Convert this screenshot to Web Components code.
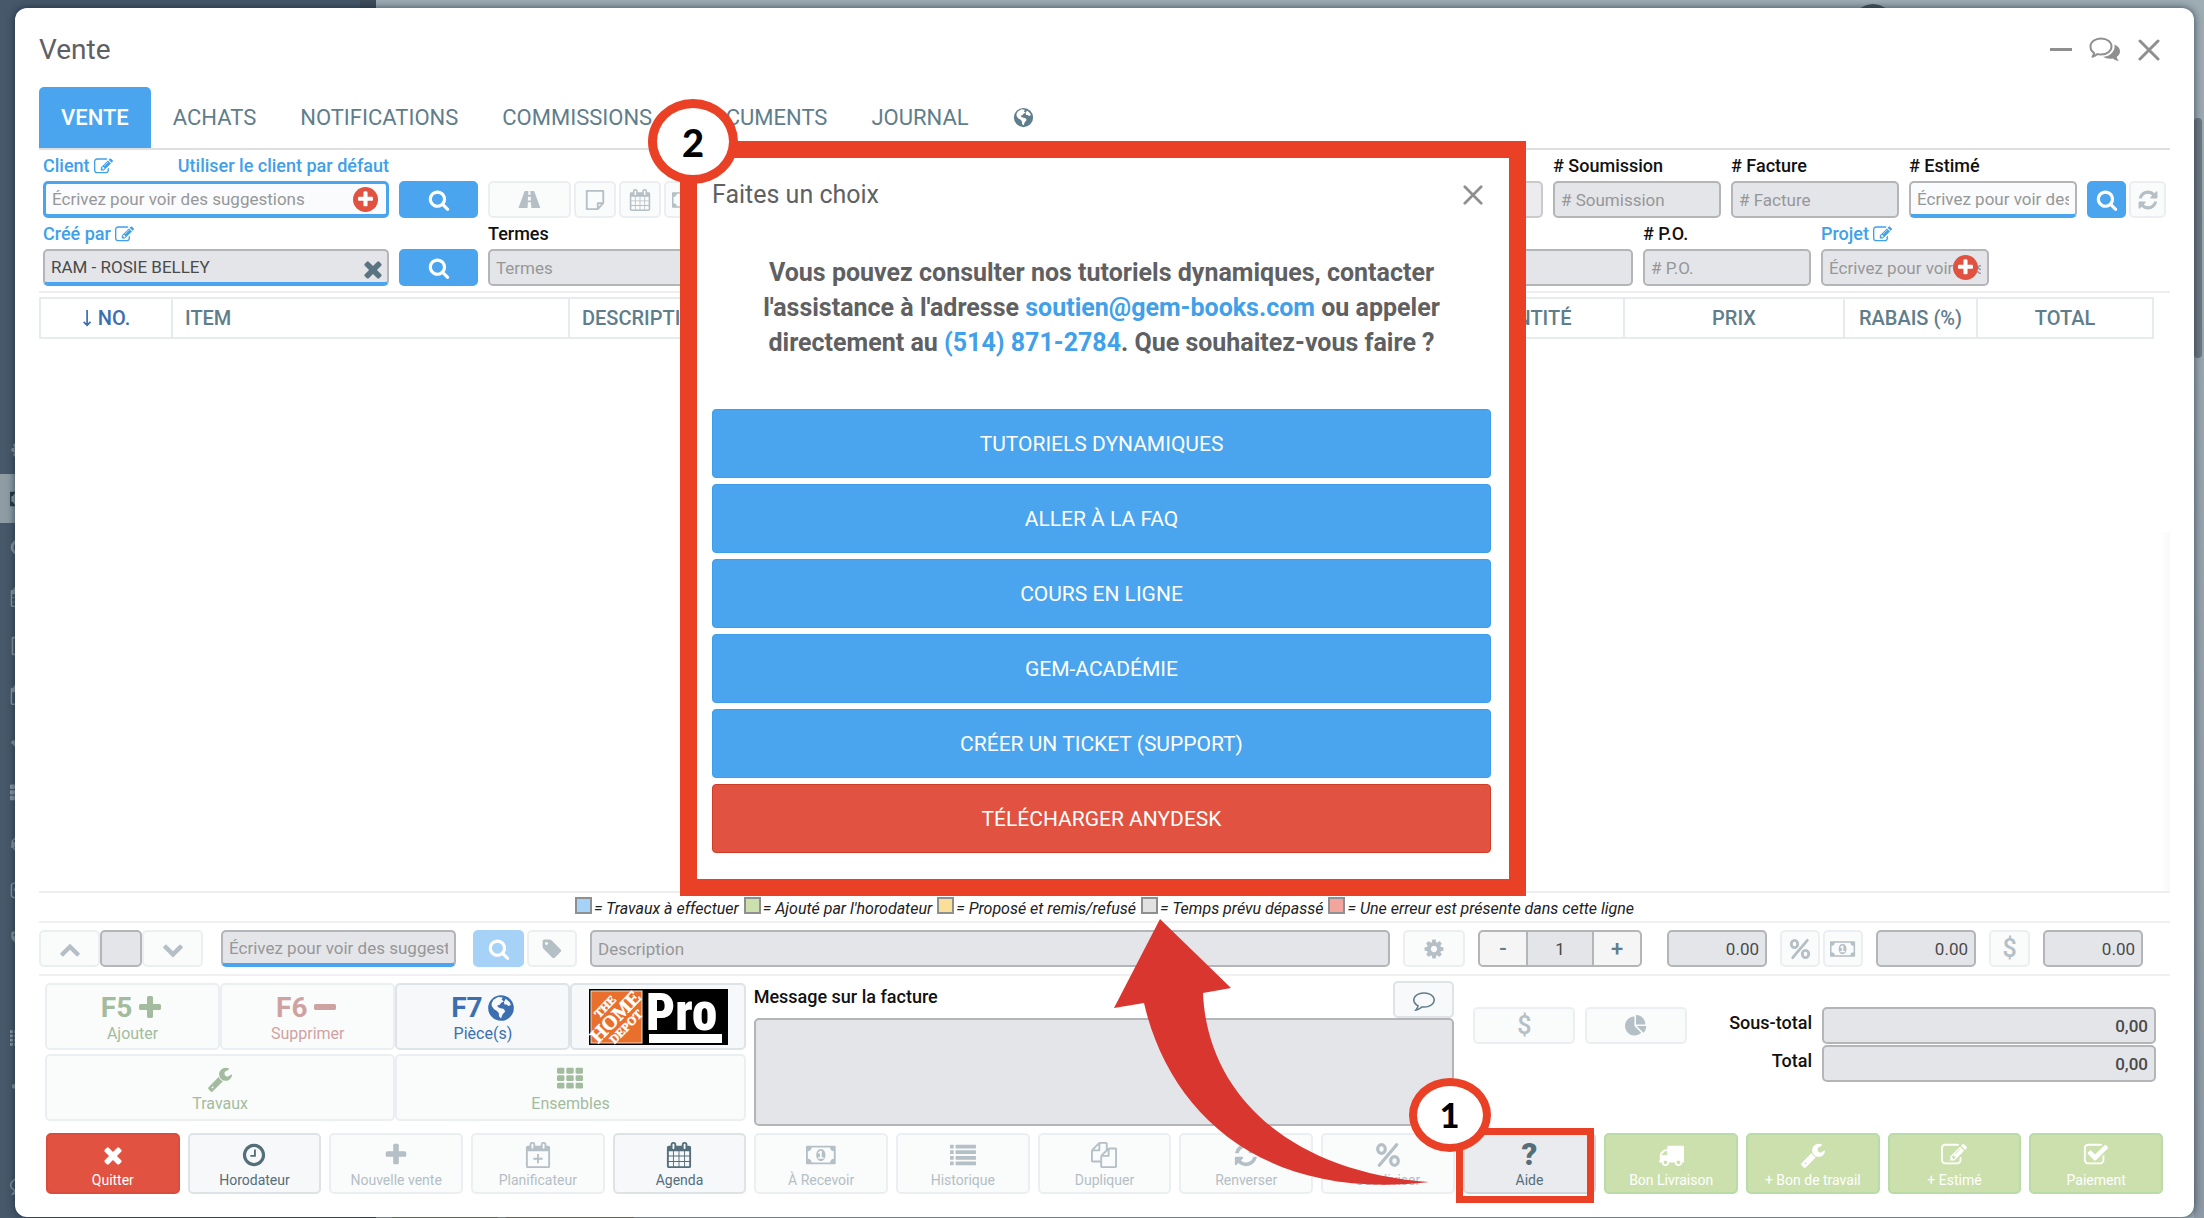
<!DOCTYPE html>
<html lang="fr">
<head>
<meta charset="utf-8">
<title>Vente</title>
<style>
body{ margin:0; font-family:Roboto,"Liberation Sans",sans-serif; font-size:17px; color:#212121; background:#96a3ad; }
</style>
</head>
<body>
<sale-app></sale-app>
<script>
const FA = '0 0 1792 1792';
const ICONS = {
    search: [FA, '<path d="M1216 832q0-185-131.5-316.5t-316.5-131.5-316.5 131.5-131.5 316.5 131.5 316.5 316.5 131.5 316.5-131.5 131.5-316.5zm512 832q0 52-38 90t-90 38q-54 0-90-38l-343-342q-179 124-399 124-143 0-273.5-55.5t-225-150-150-225-55.5-273.5 55.5-273.5 150-225 225-150 273.5-55.5 273.5 55.5 225 150 150 225 55.5 273.5q0 220-124 399l343 343q37 37 37 90z"/>'],
    times: [FA, '<path d="M1490 1322q0 40-28 68l-136 136q-28 28-68 28t-68-28l-294-294-294 294q-28 28-68 28t-68-28l-136-136q-28-28-28-68t28-68l294-294-294-294q-28-28-28-68t28-68l136-136q28-28 68-28t68 28l294 294 294-294q28-28 68-28t68 28l136 136q28 28 28 68t-28 68l-294 294 294 294q28 28 28 68z"/>'],
    plus: [FA, '<path d="M1600 736v192q0 40-28 68t-68 28h-416v416q0 40-28 68t-68 28h-192q-40 0-68-28t-28-68v-416h-416q-40 0-68-28t-28-68v-192q0-40 28-68t68-28h416v-416q0-40 28-68t68-28h192q40 0 68 28t28 68v416h416q40 0 68 28t28 68z"/>'],
    minus: [FA, '<path d="M1600 736v192q0 40-28 68t-68 28h-1216q-40 0-68-28t-28-68v-192q0-40 28-68t68-28h1216q40 0 68 28t28 68z"/>'],
    clock: [FA, '<path d="M1024 544v448q0 14-9 23t-23 9h-320q-14 0-23-9t-9-23v-64q0-14 9-23t23-9h224v-352q0-14 9-23t23-9h64q14 0 23 9t9 23zm416 352q0-148-73-273t-198-198-273-73-273 73-198 198-73 273 73 273 198 198 273 73 273-73 198-198 73-273zm224 0q0 209-103 385.5t-279.5 279.5-385.5 103-385.5-103-279.5-279.5-103-385.5 103-385.5 279.5-279.5 385.5-103 385.5 103 279.5 279.5 103 385.5z"/>'],
    calendar: [FA, '<path d="M192 1664h288v-288h-288v288zm352 0h320v-288h-320v288zm-352-352h288v-320h-288v320zm352 0h320v-320h-320v320zm-352-384h288v-288h-288v288zm736 736h320v-288h-320v288zm-384-736h320v-288h-320v288zm768 736h288v-288h-288v288zm-384-352h320v-320h-320v320zm-352-864v-288q0-13-9.500-22.500t-22.500-9.500h-64q-13 0-22.500 9.500t-9.500 22.500v288q0 13 9.500 22.500t22.500 9.500h64q13 0 22.500-9.500t9.500-22.500zm736 864h288v-320h-288v320zm-384-384h320v-288h-320v288zm384 0h288v-288h-288v288zm32-480v-288q0-13-9.500-22.500t-22.500-9.500h-64q-13 0-22.500 9.500t-9.500 22.500v288q0 13 9.500 22.500t22.500 9.500h64q13 0 22.500-9.500t9.500-22.500zm384-64v1280q0 52-38 90t-90 38h-1408q-52 0-90-38t-38-90v-1280q0-52 38-90t90-38h128v-96q0-66 47-113t113-47h64q66 0 113 47t47 113v96h384v-96q0-66 47-113t113-47h64q66 0 113 47t47 113v96h128q52 0 90 38t38 90z"/>'],
    calplus: [FA, '<path fill-rule="evenodd" d="M1728 256v1408q0 128-128 128H192q-128 0-128-128V384q0-128 128-128h128v-96q0-160 160-160h64q160 0 160 160v96h384v-96q0-160 160-160h64q160 0 160 160v96h128q128 0 128 128zM192 640v1024h1408V640zM448 128v320h128V128zm768 0v320h128V128zM832 832h128v256h256v128H960v256H832v-256H576v-128h256z"/>'],
    edit: [FA, '<path d="M888 1184l116-116-152-152-116 116v56h96v96h56zm440-720q-16-16-33 1l-350 350q-17 17-1 33t33-1l350-350q17-17 1-33zm80 594v190q0 119-84.500 203.500t-203.500 84.500h-832q-119 0-203.500-84.500t-84.500-203.500v-832q0-119 84.500-203.500t203.500-84.500h832q63 0 117 25 15 7 18 23 3 17-9 29l-49 49q-14 14-32 8-23-6-45-6h-832q-66 0-113 47t-47 113v832q0 66 47 113t113 47h832q66 0 113-47t47-113v-126q0-13 9-22l64-64q15-15 35-7t20 29zm-96-738l288 288-672 672h-288v-288zm444 132l-92 92-288-288 92-92q28-28 68-28t68 28l152 152q28 28 28 68t-28 68z"/>'],
    check: [FA, '<path d="M1472 930v318q0 119-84.500 203.500t-203.500 84.500h-832q-119 0-203.500-84.500t-84.500-203.500v-832q0-119 84.500-203.500t203.500-84.500h832q63 0 117 25 15 7 18 23 3 17-9 29l-49 49q-10 10-23 10-3 0-9-2-23-6-45-6h-832q-66 0-113 47t-47 113v832q0 66 47 113t113 47h832q66 0 113-47t47-113v-254q0-13 9-22l64-64q10-10 23-10 6 0 12 3 20 8 20 29zm231-489l-814 814q-24 24-57 24t-57-24l-430-430q-24-24-24-57t24-57l110-110q24-24 57-24t57 24l263 263 647-647q24-24 57-24t57 24l110 110q24 24 24 57t-24 57z"/>'],
    wrench: [FA, '<path d="M448 1472q0-26-19-45t-45-19-45 19-19 45 19 45 45 19 45-19 19-45zm644-420l-682 682q-37 37-90 37-52 0-91-37l-106-108q-38-36-38-90 0-53 38-91l681-681q39 98 114.500 173.500t173.500 114.500zm634-435q0 39-23 106-47 134-164.500 217.500t-258.500 83.500q-185 0-316.500-131.500t-131.500-316.500 131.500-316.500 316.500-131.500q58 0 121.500 16.500t107.500 46.500q16 11 16 28t-16 28l-293 169v224l193 107q5-3 79-48.500t135.500-81 70.500-35.500q15 0 23.500 10t8.500 25z"/>'],
    th: [FA, [128, 640, 1152].map(y => [0, 640, 1280].map(x => `<rect x="${x}" y="${y}" width="512" height="400" rx="96"/>`).join('')).join('')],
    list: [FA, [192, 576, 960, 1344].map(y => `<rect x="0" y="${y}" width="256" height="256" rx="32"/><rect x="384" y="${y}" width="1408" height="256" rx="32"/>`).join('')],
    money: ['0 0 2048 1792', '<path d="M832 1152h384v-96h-128v-448h-114l-148 137 77 80q42-37 55-57h2v288h-128v96zm512-256q0 70-21 142t-59.500 134-101.500 101-138 39-138-39-101.500-101-59.500-134-21-142 21-142 59.500-134 101.500-101 138-39 138 39 101.500 101 59.500 134 21 142zm576 256v-512q-106 0-181-75t-75-181h-1280q0 106-75 181t-181 75v512q106 0 181 75t75 181h1280q0-106 75-181t181-75zm128-832v1152q0 26-19 45t-45 19h-1920q-26 0-45-19t-19-45v-1152q0-26 19-45t45-19h1920q26 0 45 19t19 45z"/>'],
    refresh: [FA, '<path d="M1639 1056q0 5-1 7-64 268-268 434.500t-478 166.500q-146 0-282.500-55t-243.500-157l-129 129q-19 19-45 19t-45-19-19-45v-448q0-26 19-45t45-19h448q26 0 45 19t19 45-19 45l-137 137q71 66 161 102t187 36q134 0 250-65t186-179q11-17 53-117 8-23 30-23h192q13 0 22.500 9.500t9.500 22.500zm25-800v448q0 26-19 45t-45 19h-448q-26 0-45-19t-19-45 19-45l138-138q-148-137-349-137-134 0-250 65t-186 179q-11 17-53 117-8 23-30 23h-199q-13 0-22.500-9.500t-9.500-22.500v-7q65-268 270-434.500t480-166.500q146 0 284 55.500t245 156.500l130-129q19-19 45-19t45 19 19 45z"/>'],
    truck: [FA, '<path d="M640 1408q0-52-38-90t-90-38-90 38-38 90 38 90 90 38 90-38 38-90zm-384-512h384v-256h-158q-13 0-22 9l-195 195q-9 9-9 22v30zm1280 512q0-52-38-90t-90-38-90 38-38 90 38 90 90 38 90-38 38-90zm256-1088v1024q0 15-4 26.500t-13.500 18.500-16.500 11.500-23.500 6-22.500 2-25.500 0-22.500-.5q0 106-75 181t-181 75-181-75-75-181h-384q0 106-75 181t-181 75-181-75-75-181h-64q-3 0-22.500.5t-25.500 0-22.500-2-23.500-6-16.500-11.500-13.500-18.500-4-26.500q0-26 19-45t45-19v-320q0-8-.5-35t0-38 2.500-34.500 6.500-37 14-30.500 22.500-30l198-198q19-19 50.500-32t58.500-13h160v-192q0-26 19-45t45-19h1024q26 0 45 19t19 45z"/>'],
    copy: [FA, '<path d="M1696 384q40 0 68 28t28 68v1216q0 40-28 68t-68 28h-960q-40 0-68-28t-28-68v-288h-544q-40 0-68-28t-28-68v-672q0-40 20-88t48-76l408-408q28-28 76-48t88-20h416q40 0 68 28t28 68v328q68-40 128-40h416zm-544 213l-299 299h299v-299zm-640-384l-299 299h299v-299zm196 647l316-316v-416h-384v416q0 40-28 68t-68 28h-416v640h512v-256q0-40 20-88t48-76zm956 804v-1152h-384v416q0 40-28 68t-68 28h-416v640h896z"/>'],
    tag: [FA, '<path d="M576 448q0-53-37.500-90.500t-90.500-37.500-90.500 37.500-37.500 90.500 37.500 90.500 90.500 37.500 90.500-37.500 37.500-90.500zm1067 576q0 53-37 90l-491 492q-39 37-91 37-53 0-90-37l-715-716q-38-37-64.500-101t-26.500-117v-416q0-52 38-90t90-38h416q53 0 117 26.500t102 64.500l715 714q37 39 37 91z"/>'],
    cog: [FA, '<path d="M1152 896q0-106-75-181t-181-75-181 75-75 181 75 181 181 75 181-75 75-181zm512-109v222q0 12-8 23t-20 13l-185 28q-19 54-39 91 35 50 107 138 10 12 10 25t-9 23q-27 37-99 108t-94 71q-12 0-26-9l-138-108q-44 23-91 38-16 136-29 186-7 28-36 28h-222q-14 0-24.500-8.500t-11.500-21.500l-28-184q-49-16-90-37l-141 107q-10 9-25 9-14 0-25-11-126-114-165-168-7-10-7-23 0-12 8-23 15-21 51-66.500t54-70.500q-27-50-41-99l-183-27q-13-2-21-12.500t-8-23.500v-222q0-12 8-23t19-13l186-28q14-46 39-92-40-57-107-138-10-12-10-24 0-10 9-23 26-36 98.500-107.500t94.500-71.500q13 0 26 10l138 107q44-23 91-38 16-136 29-186 7-28 36-28h222q14 0 24.500 8.500t11.500 21.500l28 184q49 16 90 37l142-107q9-9 24-9 13 0 25 10 129 119 165 170 7 8 7 22 0 12-8 23-15 21-51 66.500t-54 70.500q26 50 41 98l183 28q13 2 21 12.500t8 23.500z"/>'],
    comment: [FA, '<path d="M896 384q-204 0-381.500 69.500t-282 187.500-104.500 255q0 112 71.500 213.500t201.500 175.500l87 50-27 96q-24 91-70 172 152-63 275-171l43-38 57 6q69 8 130 8 204 0 381.500-69.500t282-187.500 104.500-255-104.500-255-282-187.500-381.500-69.500zm896 512q0 174-120 321.500t-326 233-450 85.500q-70 0-145-8-198 175-460 242-49 14-114 22h-5q-15 0-27-10.500t-16-27.500v-1q-3-4-.5-12t2-10 4.500-9.500l6-9 7-8.500 8-9q7-8 31-34.500t34.500-38 31-39.500 32.500-51 27-59 26-76q-157-89-247.500-220t-90.500-281q0-174 120-321.500t326-233 450-85.500 450 85.500 326 233 120 321.500z"/>'],
    comments: ['0 0 32 26', '<path fill="none" stroke="currentColor" stroke-width="2" stroke-linejoin="round" d="M12 1.500c6 0 10.500 3.500 10.500 8s-4.500 8-10.500 8c-1.200 0-2.400-.1-3.500-.4-1.400 1.300-3 2.200-5 2.600.9-1.200 1.500-2.200 1.700-3.700C2.800 14.500 1.500 12.200 1.500 9.500c0-4.500 4.500-8 10.500-8z"/><path d="M25.500 7.500c3.200 1.200 5.500 3.700 5.500 6.700 0 2.300-1.300 4.300-3.300 5.700.4 1.700 1.200 2.900 2.500 4.200-2.600-.3-4.600-1.300-6.300-2.700-3.600.7-7.200.1-9.800-1.600 7-.3 12.500-5.500 11.400-12.300z"/>'],
    up: [FA, '<path d="M1683 1331l-166 165q-19 19-45 19t-45-19l-531-531-531 531q-19 19-45 19t-45-19l-166-165q-19-19-19-45.500t19-45.500l742-741q19-19 45-19t45 19l742 741q19 19 19 45.500t-19 45.500z"/>'],
    down: [FA, '<path d="M1683 808l-742 741q-19 19-45 19t-45-19l-742-741q-19-19-19-45.500t19-45.500l166-165q19-19 45-19t45 19l531 531 531-531q19-19 45-19t45 19l166 165q19 19 19 45.500t-19 45.500z"/>'],
    pie: [FA, '<path d="M768 890l546 546q-106 108-247.500 168t-298.500 60q-209 0-385.500-103t-279.500-279.500-103-385.500 103-385.500 279.500-279.500 385.500-103v762zm187 6h773q0 157-60 298.500t-168 247.500zm709-128h-768v-768q209 0 385.500 103t279.500 279.500 103 385.500z"/>'],
    percent: ['0 0 24 24', '<g fill="none" stroke="currentColor" stroke-width="3"><ellipse cx="6" cy="6.500" rx="3.500" ry="4"/><ellipse cx="18" cy="17.500" rx="3.500" ry="4"/><path stroke-linecap="round" d="M20 2.500L4 21.500"/></g>'],
    note: ['0 0 24 24', '<path fill="none" stroke="currentColor" stroke-width="2" stroke-linejoin="round" d="M3 2h18v13.500L15 22H3zM21 15.500h-6V22"/>'],
    road: ['0 0 24 20', '<path fill-rule="evenodd" d="M7 1h4l-.3 4h2.600L13 1h4l6.500 18H14l-.4-6h-3.200L10 19H.5zM10.600 7l-.2 4h3.200l-.2-4z"/>'],
    globe: ['0 0 24 24', '<path fill-rule="evenodd" d="M12 1a11 11 0 110 22 11 11 0 010-22zM5.500 5l4-2.500 4 .5-1 2 2 1.200-2.500 1.500-1.200 1.800-1.800.2.300 1.500 1.800.8 3.400.9 1.100 2-2.300 2.700-1.300 3.400-1.700-1.900-.2-2.900-1.800-1.900-2.200-1.300-1.900-2.400-.3-2.500zM16 4l3.500 3 1 2.500-2.200.8-1.500-1.300h-1.800l-.5-2z"/>'],
    close: ['0 0 22 22', '<path fill="none" stroke="currentColor" stroke-width="3" stroke-linecap="round" d="M2 2l18 18M20 2L2 20"/>'],
    dash: ['0 0 22 22', '<path d="M0 9h22v3H0z"/>'],
    sort: ['0 0 12 20', '<path fill="none" stroke="currentColor" stroke-width="2" d="M6 0v18M2 14l4 4 4-4"/>']
};

const BOX = `*{ box-sizing:border-box; } button,input,textarea{ font:inherit; margin:0; }`;

class SaleIcon extends HTMLElement {
    constructor() {
        super();
        this.attachShadow({ mode: 'open' });
    }

    connectedCallback() {
        const [box, body] = ICONS[this.getAttribute('name')];
        const size = this.getAttribute('size') || 20;
        this.shadowRoot.innerHTML = `
        <style>
        :host{ display:inline-flex; flex:none; }
        svg{ display:block; width:auto; height:${size}px; fill:currentColor; }
        </style>
        <svg viewBox="${box}" height="${size}" aria-hidden="true">${body}</svg>
        `
    }
}

// small square button: search, refresh, tag...
class IconBtn extends HTMLElement {
    constructor() {
        super();
        this.attachShadow({ mode: 'open' });
    }

    connectedCallback() {
        const icon = this.getAttribute('icon');
        this.shadowRoot.innerHTML = `
        <style>
        ${BOX}
        :host{ display:block; flex:none; width:var(--w,42px); height:37px; }
        button{ display:flex; align-items:center; justify-content:center; width:100%; height:100%; padding:0; border:2px solid #eceff1; border-radius:5px; background:#fafbfb; color:#b4bfc6; font-size:25px; font-weight:500; line-height:32px; }
        :host([type="primary"]) button{ background:#4aa5ee; border-color:#4aa5ee; color:#fff; }
        :host([type="soft"]) button{ background:#a5d2f6; border-color:#a5d2f6; color:#fff; }
        :host([type="plain"]) button{ background:#f8f9fa; border-color:#dde3e6; color:#607d8b; }
        </style>
        <button type="button" aria-label="${this.getAttribute('label') || icon}">${icon ? `<sale-icon name="${icon}" size="${this.getAttribute('size') || 22}"></sale-icon>` : '<slot></slot>'}</button>
        `
    }
}

class FieldBox extends HTMLElement {
    constructor() {
        super();
        this.attachShadow({ mode: 'open' });
    }

    connectedCallback() {
        const get = name => this.getAttribute(name) || '';
        const label = get('label');
        this.shadowRoot.innerHTML = `
        <style>
        ${BOX}
        :host{ display:block; flex:none; width:var(--w,168px); }
        .top{ display:flex; align-items:center; height:24px; margin-bottom:3px; font-size:18px; font-weight:500; line-height:24px; color:#111; white-space:nowrap; }
        .top a{ color:#41a0ea; text-decoration:none; }
        .top a.edit{ display:flex; margin-left:4px; }
        .top a.extra{ margin-left:auto; }
        :host([link]) label{ color:#41a0ea; }
        .wrap{ display:flex; align-items:center; position:relative; }
        input{ width:100%; height:37px; padding:0 6px; border:2px solid #b3b5b8; border-radius:5px; background:#e4e5e9; color:#4a4a4a; outline:0; }
        input::placeholder{ color:#969798; opacity:1; }
        :host([white]) input{ background:#fafbfc; }
        :host([accent]) input{ border-bottom:4px solid #4aa5ee; }
        :host([focused]) input{ border:3px solid #4aa5ee; border-bottom-width:4px; }
        :host([right]) input{ text-align:right; }
        :host([strong]) input{ font-weight:500; }
        .badge{ position:absolute; right:11px; display:flex; align-items:center; justify-content:center; width:25px; height:25px; border-radius:50%; border:0; padding:0; background:#e15241; color:#fff; }
        .clear{ position:absolute; right:3px; bottom:4px; display:flex; border:0; padding:0; background:none; color:#5b7482; }
        </style>
        ${label ? `<div class="top"><label for="f">${label}</label>${this.hasAttribute('link') ? '<a class="edit" href="#" aria-label="Modifier"><sale-icon name="edit" size="19"></sale-icon></a>' : ''}${get('extra') ? `<a class="extra" href="#">${get('extra')}</a>` : ''}</div>` : ''}
        <div class="wrap">
            <input id="f" type="text" aria-label="${label || get('hint') || get('name')}" placeholder="${get('hint')}" value="${get('value')}">
            ${this.hasAttribute('add') ? '<button class="badge" type="button" aria-label="Ajouter"><sale-icon name="plus" size="19"></sale-icon></button>' : ''}
            ${this.hasAttribute('clear') ? '<button class="clear" type="button" aria-label="Effacer"><sale-icon name="times" size="26"></sale-icon></button>' : ''}
        </div>
        `
    }
}

class SaleTabs extends HTMLElement {
    constructor() {
        super();
        const shadowRoot = this.attachShadow({ mode: 'open' });
        shadowRoot.innerHTML = `
        <style>
        ${BOX}
        :host{ display:block; border-bottom:2px solid #dfdfdf; }
        nav{ display:flex; }
        a{ display:flex; align-items:center; height:61px; padding:0 22px; color:#607d8b; font-size:22px; text-decoration:none; }
        a.on{ background:#4aa5ee; color:#fff; font-weight:500; border-radius:5px 5px 0 0; }
        </style>
        <nav>
            <a class="on" href="#">VENTE</a>
            <a href="#">ACHATS</a>
            <a href="#">NOTIFICATIONS</a>
            <a href="#">COMMISSIONS</a>
            <a href="#">DOCUMENTS</a>
            <a href="#">JOURNAL</a>
            <a href="#" aria-label="Web"><sale-icon name="globe" size="21"></sale-icon></a>
        </nav>
        `
    }
}

class SaleFilters extends HTMLElement {
    constructor() {
        super();
        const shadowRoot = this.attachShadow({ mode: 'open' });
        shadowRoot.innerHTML = `
        <style>
        ${BOX}
        :host{ display:flex; flex-direction:column; gap:4px; padding:4px 4px 5px 4px; border-bottom:2px solid #eee; }
        .row{ display:flex; align-items:flex-end; gap:10px; }
        .group{ display:flex; gap:3px; }
        .grow{ flex:1; width:auto; min-width:0; }
        .light{ opacity:.7; }
        .late{ margin-right:177px; }
        </style>
        <div class="row">
            <field-box style="--w:346px" label="Client" link focused white add extra="Utiliser le client par défaut" hint="Écrivez pour voir des suggestions"></field-box>
            <icon-btn style="--w:79px" type="primary" icon="search" label="Rechercher"></icon-btn>
            <div class="group">
                <icon-btn style="--w:83px" icon="road" size="19"></icon-btn>
                <icon-btn icon="note"></icon-btn>
                <icon-btn icon="calendar"></icon-btn>
                <icon-btn icon="money"></icon-btn>
            </div>
            <field-box class="grow light" name="Statut"></field-box>
            <field-box label="# Soumission" hint="# Soumission"></field-box>
            <field-box label="# Facture" hint="# Facture"></field-box>
            <field-box label="# Estimé" white accent hint="Écrivez pour voir des suggestions"></field-box>
            <div class="group">
                <icon-btn style="--w:39px" type="primary" icon="search" label="Rechercher"></icon-btn>
                <icon-btn style="--w:37px" icon="refresh"></icon-btn>
            </div>
        </div>
        <div class="row">
            <field-box style="--w:346px" label="Créé par" link accent clear value="RAM - ROSIE BELLEY"></field-box>
            <icon-btn style="--w:79px" type="primary" icon="search" label="Rechercher"></icon-btn>
            <field-box class="grow" label="Termes" hint="Termes"></field-box>
            <field-box label="# P.O." hint="# P.O."></field-box>
            <field-box class="late" label="Projet" link add hint="Écrivez pour voir des suggestions"></field-box>
        </div>
        `
    }
}

class SaleLines extends HTMLElement {
    constructor() {
        super();
        const shadowRoot = this.attachShadow({ mode: 'open' });
        shadowRoot.innerHTML = `
        <style>
        ${BOX}
        :host{ display:block; flex:1; padding:4px 16px 0 0; border-bottom:2px solid #eee; background:linear-gradient(to left,#f9f9f9,#fff) right bottom/10px 60% no-repeat; }
        table{ width:100%; table-layout:fixed; border-collapse:collapse; }
        th{ height:40px; padding:0 12px; border:2px solid #e6ebee; text-align:left; font-size:20px; font-weight:500; color:#607d8b; overflow:hidden; white-space:nowrap; }
        .c{ text-align:center; }
        .sorted{ color:#3b6fb0; }
        .sorted sale-icon{ margin-right:6px; vertical-align:-2px; }
        </style>
        <table>
            <colgroup><col style="width:132px"><col style="width:397px"><col><col style="width:200px"><col style="width:220px"><col style="width:133px"><col style="width:176px"></colgroup>
            <thead><tr>
                <th class="c sorted"><sale-icon name="sort" size="17"></sale-icon>NO.</th>
                <th>ITEM</th>
                <th>DESCRIPTION</th>
                <th class="c">QUANTITÉ</th>
                <th class="c">PRIX</th>
                <th class="c">RABAIS (%)</th>
                <th class="c">TOTAL</th>
            </tr></thead>
            <tbody></tbody>
        </table>
        `
    }
}

class SaleLegend extends HTMLElement {
    constructor() {
        super();
        const shadowRoot = this.attachShadow({ mode: 'open' });
        const items = [
            ['#a5d2f6', 'Travaux à effectuer'],
            ['#cce0ad', "Ajouté par l'horodateur"],
            ['#fadf98', 'Proposé et remis/refusé'],
            ['#e2e2e2', 'Temps prévu dépassé'],
            ['#f1a59d', 'Une erreur est présente dans cette ligne']
        ];
        shadowRoot.innerHTML = `
        <style>
        ${BOX}
        :host{ display:flex; justify-content:center; gap:5px; box-sizing:border-box; height:30px; padding-top:4px; border-bottom:2px solid #f0f0f0; font-size:16px; font-style:italic; line-height:24px; white-space:nowrap; }
        span{ display:flex; gap:2px; }
        i{ width:17px; height:17px; border:2px solid #8d8f91; }
        </style>
        ${items.map(([color, text]) => `<span><i style="background:${color}"></i>= ${text}</span>`).join('')}
        `
    }
}

class LineEditor extends HTMLElement {
    constructor() {
        super();
        const shadowRoot = this.attachShadow({ mode: 'open' });
        shadowRoot.innerHTML = `
        <style>
        ${BOX}
        :host{ display:flex; align-items:center; gap:13px; padding:7px 27px 7px 0; border-bottom:2px solid #f0f0f0; }
        .group{ display:flex; gap:3px; }
        .tight{ gap:0; margin-right:5px; }
        .grow{ flex:1; width:auto; min-width:0; }
        .item{ margin-right:4px; }
        .stepper{ display:flex; margin-right:12px; height:37px; border:2px solid #b3b5b8; border-radius:5px; overflow:hidden; background:#f5f5f5; }
        .stepper button{ width:46px; padding:0; border:0; background:none; color:#607d8b; font-size:22px; font-weight:500; }
        .stepper input{ width:68px; padding:0; border:solid #b3b5b8; border-width:0 2px; background:#e4e5e9; color:#4a4a4a; text-align:center; }
        </style>
        <div class="group tight">
            <icon-btn style="--w:61px" icon="up"></icon-btn>
            <field-box style="--w:42px" name="Position"></field-box>
            <icon-btn style="--w:61px" icon="down"></icon-btn>
        </div>
        <field-box class="item" style="--w:235px" accent hint="Écrivez pour voir des suggestions"></field-box>
        <div class="group">
            <icon-btn style="--w:51px" type="soft" icon="search" label="Rechercher"></icon-btn>
            <icon-btn style="--w:50px" icon="tag"></icon-btn>
        </div>
        <field-box class="grow" hint="Description"></field-box>
        <icon-btn style="--w:62px" icon="cog"></icon-btn>
        <div class="stepper"><button type="button">-</button><input type="text" aria-label="Quantité" value="1"><button type="button">+</button></div>
        <field-box style="--w:100px" right name="Prix" value="0.00"></field-box>
        <div class="group">
            <icon-btn style="--w:40px" icon="percent"></icon-btn>
            <icon-btn style="--w:40px" icon="money"></icon-btn>
        </div>
        <field-box style="--w:100px" right name="Rabais" value="0.00"></field-box>
        <icon-btn style="--w:41px" label="Montant">$</icon-btn>
        <field-box style="--w:100px" right name="Total" value="0.00"></field-box>
        `
    }
}

// big button with an icon over its label
class ActionBtn extends HTMLElement {
    constructor() {
        super();
        this.attachShadow({ mode: 'open' });
    }

    connectedCallback() {
        const icon = this.getAttribute('icon');
        const key = this.getAttribute('key');
        this.shadowRoot.innerHTML = `
        <style>
        ${BOX}
        :host{ display:block; position:relative; min-width:0; height:61px; font-size:14px; line-height:18px; }
        button{ display:flex; flex-direction:column; align-items:center; justify-content:center; gap:3px; width:100%; height:100%; padding:4px 0 0; border:2px solid #dde3e6; border-radius:5px; background:#f6f8fa; color:#546e7a; white-space:nowrap; }
        :host([off]) button{ background:#fafbfb; border-color:#eceff1; color:#b4bfc6; }
        :host([type="red"]) button{ background:#e15241; border-color:#dc4c3c; color:#fff; }
        :host([type="green"]) button{ background:#cce0ad; border-color:#b9dba8; color:#fff; }
        :host([type="held"]) button{ background:#e9ebee; border-color:#cfd5d9; }
        :host([tall]){ height:67px; font-size:16px; }
        :host([tone="green"]) button{ color:#a3bb9f; }
        :host([tone="rose"]) button{ color:#cfa2a2; }
        :host([tone="blue"]) button{ color:#3b6fb0; }
        .key{ display:flex; align-items:center; gap:4px; height:28px; font-size:28px; font-weight:700; }
        b{ font-size:31px; font-weight:900; line-height:26px; }
        :host([icon="logo"]) button{ padding:0; }
        </style>
        ${icon === 'logo' ? '<button type="button"><slot></slot></button>' : `
        <button type="button">
            ${key ? `<span class="key">${key}<sale-icon name="${icon}" size="28"></sale-icon></span>` : icon === '?' ? '<b>?</b>' : `<sale-icon name="${icon}" size="26"></sale-icon>`}
            <slot></slot>
        </button>
        <slot name="over"></slot>`}
        `
    }
}

class ProLogo extends HTMLElement {
    constructor() {
        super();
        const shadowRoot = this.attachShadow({ mode: 'open' });
        shadowRoot.innerHTML = `
        <style>
        :host{ display:block; }
        svg{ display:block; overflow:visible; }
        </style>
        <svg width="139" height="56" viewBox="0 0 139 56" role="img" aria-label="The Home Depot Pro">
            <rect width="139" height="56" fill="#000"/>
            <rect x="2" y="2" width="51" height="52" fill="#e96f2c" stroke="#f3d9c8"/>
            <g fill="#fff" stroke="#fff" stroke-width=".5" text-anchor="middle" font-family="Liberation Serif,serif" font-weight="700" transform="rotate(-46 27 28)">
                <text x="27" y="17" font-size="12">THE</text>
                <text x="27" y="34" font-size="20">HOME</text>
                <text x="27" y="46" font-size="12">DEPOT</text>
            </g>
            <text x="57" y="41" fill="#fff" font-family="Roboto Condensed,Roboto,sans-serif" font-weight="900" font-size="51">Pro</text>
            <rect x="60" y="45" width="73" height="9" fill="#fff"/>
        </svg>
        `
    }
}

class StepBadge extends HTMLElement {
    constructor() {
        super();
        const shadowRoot = this.attachShadow({ mode: 'open' });
        shadowRoot.innerHTML = `
        <style>
        :host{ box-sizing:border-box; display:flex; align-items:center; justify-content:center; width:82px; height:74px; border:8px solid #ea4026; border-radius:50%; background:#fff; color:#000; font-family:Lato,sans-serif; font-size:34px; font-weight:900; }
        :host([large]){ width:90px; height:85px; border-width:9px; font-size:38px; }
        </style>
        <slot></slot>
        `
    }
}

class SaleFooter extends HTMLElement {
    constructor() {
        super();
        const shadowRoot = this.attachShadow({ mode: 'open' });
        shadowRoot.innerHTML = `
        <style>
        ${BOX}
        :host{ display:block; padding:5px 7px 23px 6px; }
        .main{ display:grid; grid-template-columns:repeat(3,1fr); gap:8px; }
        .keys{ display:grid; grid-template-columns:repeat(4,1fr); gap:4px 0; align-content:start; padding-top:2px; }
        .wide{ grid-column:span 2; }
        .head{ display:flex; justify-content:space-between; height:37px; font-size:18px; font-weight:500; line-height:32px; color:#111; }
        textarea{ display:block; width:100%; height:108px; border:2px solid #b3b5b8; border-radius:5px; background:#e4e5e9; resize:none; }
        .totals{ display:flex; align-items:flex-start; gap:10px; padding:26px 7px 0 11px; }
        .sums{ flex:1; display:grid; grid-template-columns:auto 334px; justify-content:end; gap:1px 10px; font-weight:500; line-height:32px; color:#111; text-align:right; }
        .sums span{ font-size:18px; }
        .actions{ display:grid; grid-template-columns:repeat(15,minmax(0,1fr)); gap:8px; margin-top:7px; padding-left:1px; }
        .frame{ position:absolute; inset:-5px 2px -9px -7px; border:7px solid #ea4026; pointer-events:none; }
        .arrow{ position:absolute; left:-349px; top:-214px; pointer-events:none; }
        step-badge{ position:absolute; left:-54px; top:-55px; }
        </style>
        <div class="main">
            <div class="keys">
                <action-btn tall off tone="green" key="F5" icon="plus">Ajouter</action-btn>
                <action-btn tall off tone="rose" key="F6" icon="minus">Supprimer</action-btn>
                <action-btn tall tone="blue" key="F7" icon="globe">Pièce(s)</action-btn>
                <action-btn tall icon="logo"><pro-logo></pro-logo></action-btn>
                <action-btn class="wide" tall off tone="green" icon="wrench">Travaux</action-btn>
                <action-btn class="wide" tall off tone="green" icon="th">Ensembles</action-btn>
            </div>
            <div>
                <div class="head"><label for="msg">Message sur la facture</label><icon-btn style="--w:61px" type="plain" icon="comment"></icon-btn></div>
                <textarea id="msg"></textarea>
            </div>
            <div class="totals">
                <icon-btn style="--w:102px" label="Montant">$</icon-btn>
                <icon-btn style="--w:102px" icon="pie"></icon-btn>
                <div class="sums">
                    <span>Sous-total</span><field-box style="--w:334px" right strong name="Sous-total" value="0,00"></field-box>
                    <span>Total</span><field-box style="--w:334px" right strong name="Total" value="0,00"></field-box>
                </div>
            </div>
        </div>
        <div class="actions">
            <action-btn type="red" icon="times">Quitter</action-btn>
            <action-btn icon="clock">Horodateur</action-btn>
            <action-btn off icon="plus">Nouvelle vente</action-btn>
            <action-btn off icon="calplus">Planificateur</action-btn>
            <action-btn icon="calendar">Agenda</action-btn>
            <action-btn off icon="money">À Recevoir</action-btn>
            <action-btn off icon="list">Historique</action-btn>
            <action-btn off icon="copy">Dupliquer</action-btn>
            <action-btn off icon="refresh">Renverser</action-btn>
            <action-btn off icon="percent">Subdiviser</action-btn>
            <action-btn type="held" icon="?">Aide
                <svg slot="over" class="arrow" width="315" height="274" viewBox="0 0 315 274" aria-hidden="true"><path fill="#d93630" d="M46 0L117 69 89 74C93 172 171 252 315 263 151 282 56 197 30 84L0 89z"/></svg>
                <div slot="over" class="frame"></div>
                <step-badge slot="over">1</step-badge>
            </action-btn>
            <action-btn type="green" icon="truck">Bon Livraison</action-btn>
            <action-btn type="green" icon="wrench">+ Bon de travail</action-btn>
            <action-btn type="green" icon="edit">+ Estimé</action-btn>
            <action-btn type="green" icon="check">Paiement</action-btn>
        </div>
        `
    }
}

class SaleWindow extends HTMLElement {
    constructor() {
        super();
        const shadowRoot = this.attachShadow({ mode: 'open' });
        shadowRoot.innerHTML = `
        <style>
        ${BOX}
        :host{ display:flex; flex-direction:column; box-sizing:border-box; padding:0 24px; border-radius:12px; background:#fff; box-shadow:0 0 8px rgba(10,30,50,.7); }
        header{ display:flex; align-items:center; justify-content:space-between; padding:26px 10px 21px 0; }
        h1{ margin:0; font-size:28px; font-weight:400; line-height:32px; color:#5f6062; }
        .tools{ display:flex; align-items:center; gap:17px; }
        .tools button{ display:flex; padding:0; border:0; background:none; color:#8f8f8f; }
        </style>
        <header>
            <h1>Vente</h1>
            <div class="tools">
                <button type="button" aria-label="Réduire"><sale-icon name="dash" size="22"></sale-icon></button>
                <button type="button" aria-label="Commentaires"><sale-icon name="comments" size="26"></sale-icon></button>
                <button type="button" aria-label="Fermer"><sale-icon name="close" size="22"></sale-icon></button>
            </div>
        </header>
        <sale-tabs></sale-tabs>
        <sale-filters></sale-filters>
        <sale-lines></sale-lines>
        <sale-legend></sale-legend>
        <line-editor></line-editor>
        <sale-footer></sale-footer>
        `
    }
}

class ChoiceModal extends HTMLElement {
    constructor() {
        super();
        const shadowRoot = this.attachShadow({ mode: 'open' });
        shadowRoot.innerHTML = `
        <style>
        ${BOX}
        :host{ position:fixed; inset:0; display:flex; justify-content:center; align-items:flex-start; padding:141px 0 0 2px; pointer-events:none; }
        section{ position:relative; width:846px; max-width:90%; padding:21px 18px 26px 15px; border:17px solid #ea4026; background:#fff; color:#5f6062; pointer-events:auto; }
        header{ display:flex; align-items:center; justify-content:space-between; padding-right:8px; }
        h2{ margin:0; font-size:25px; font-weight:400; line-height:32px; }
        .x{ display:flex; padding:0; border:0; background:none; color:#8f8f8f; }
        p{ max-width:700px; margin:44px auto 49px; font-size:25px; font-weight:700; line-height:35px; text-align:center; }
        p a{ color:#41a0ea; text-decoration:none; }
        .list{ display:grid; gap:6px; }
        .list button{ height:69px; border:1px solid #3f9eea; border-radius:4px; background:#4aa5ee; color:#fff; font-size:21px; }
        .list .red{ border-color:#d13c28; background:#e15241; }
        step-badge{ position:absolute; left:-49px; top:-59px; }
        </style>
        <section role="dialog" aria-label="Faites un choix">
            <header><h2>Faites un choix</h2><button class="x" type="button" aria-label="Fermer"><sale-icon name="close" size="20"></sale-icon></button></header>
            <p>Vous pouvez consulter nos tutoriels dynamiques, contacter l'assistance à l'adresse <a href="#">soutien@gem-books.com</a> ou appeler directement au <a href="#">(514) 871-2784</a>. Que souhaitez-vous faire ?</p>
            <div class="list">
                <button type="button">TUTORIELS DYNAMIQUES</button>
                <button type="button">ALLER À LA FAQ</button>
                <button type="button">COURS EN LIGNE</button>
                <button type="button">GEM-ACADÉMIE</button>
                <button type="button">CRÉER UN TICKET (SUPPORT)</button>
                <button class="red" type="button">TÉLÉCHARGER ANYDESK</button>
            </div>
            <step-badge large>2</step-badge>
        </section>
        `
    }
}

class SaleApp extends HTMLElement {
    constructor() {
        super();
        const shadowRoot = this.attachShadow({ mode: 'open' });
        const menu = ['cog', 'money', 'search', 'calendar', 'note', 'calplus', 'down', 'th', 'truck', 'check', 'tag', '', 'list', 'plus', '', 'comment'];
        shadowRoot.innerHTML = `
        <style>
        ${BOX}
        :host{ display:grid; min-height:100vh; }
        .back,sale-window{ grid-area:1/1; }
        .back{ display:grid; grid-template-columns:376px 1fr 10px; }
        .side{ padding-top:425px; background:#47586a; border-right:16px solid #3e4c5b; }
        .side a{ display:flex; align-items:center; height:49px; padding-left:10px; color:#8f9aa4; }
        .side a.on{ background:#8f9ca4; color:#2c3942; }
        .page{ display:flex; flex-direction:column; justify-content:space-between; background:#9fadb5; }
        .avatar{ width:40px; height:40px; margin:4px 301px 0 auto; border-radius:50%; background:#4c565d; }
        .bars{ display:flex; gap:8px; height:30px; padding-left:16px; }
        .bars i{ width:106px; background:#7d8c62; }
        .bars i + i{ width:128px; background:#8f8459; }
        .scroll{ padding-top:118px; background:linear-gradient(#9fadb5,#8e9aa5); }
        .scroll i{ display:block; width:8px; height:240px; border-radius:4px; background:#6d7983; }
        sale-window{ margin:8px 10px 1px 15px; }
        </style>
        <div class="back">
            <nav class="side">${menu.map((name, i) => `<a href="#" ${i === 1 ? 'class="on"' : ''} aria-label="Menu ${i + 1}">${name ? `<sale-icon name="${name}" size="20"></sale-icon>` : ''}</a>`).join('')}</nav>
            <div class="page"><div class="avatar"></div><div class="bars"><i></i><i></i></div></div>
            <div class="scroll"><i></i></div>
        </div>
        <sale-window></sale-window>
        <choice-modal></choice-modal>
        `
    }
}

customElements.define('sale-icon', SaleIcon);
customElements.define('icon-btn', IconBtn);
customElements.define('field-box', FieldBox);
customElements.define('sale-tabs', SaleTabs);
customElements.define('sale-filters', SaleFilters);
customElements.define('sale-lines', SaleLines);
customElements.define('sale-legend', SaleLegend);
customElements.define('line-editor', LineEditor);
customElements.define('action-btn', ActionBtn);
customElements.define('pro-logo', ProLogo);
customElements.define('step-badge', StepBadge);
customElements.define('sale-footer', SaleFooter);
customElements.define('sale-window', SaleWindow);
customElements.define('choice-modal', ChoiceModal);
customElements.define('sale-app', SaleApp);
</script>
</body>
</html>
